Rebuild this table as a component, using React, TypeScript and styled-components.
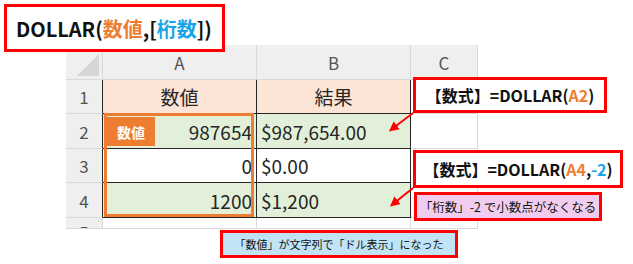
import * as React from 'react';
import styled, { createGlobalStyle } from 'styled-components';

const GlobalStyle = createGlobalStyle`
  body {
    margin: 0;
    background: #fff;
    font-family: "Noto Sans CJK JP", "Noto Sans", sans-serif;
  }
`;

const ORANGE = '#ED7D31';
const BLUE = '#16A6E8';
const RED = '#FF0000';
const GRID = '#d9d9d9';
const INK = '#262626';

const Page = styled.div`
  position: relative;
  width: 633px;
  height: 264px;
  overflow: hidden;
  box-sizing: border-box;
  padding: 45px 0 0 66px;
`;

const Sheet = styled.div`
  display: grid;
  grid-template-columns: 37px 154px 154px 67px;
  grid-template-rows: 35px 34px 35px 34px 35px 11px;
`;

const Corner = styled.div`
  position: relative;
  background: #efefef;
  border-right: 1px solid ${GRID};
  border-bottom: 1px solid ${GRID};

  &::after {
    content: '';
    position: absolute;
    right: 3px;
    bottom: 3px;
    border-left: 22px solid transparent;
    border-bottom: 22px solid #d6d6d6;
  }
`;

const ColHead = styled.div`
  display: flex;
  align-items: center;
  justify-content: center;
  background: #efefef;
  border-right: 1px solid ${GRID};
  border-bottom: 1px solid ${GRID};
  color: #555;
  font-size: 17px;
`;

const RowHead = styled.div<{ $dark?: boolean; $cut?: boolean }>`
  display: flex;
  align-items: ${(p) => (p.$cut ? 'flex-start' : 'center')};
  justify-content: center;
  overflow: hidden;
  background: #efefef;
  border-right: 1px solid ${(p) => (p.$dark ? INK : GRID)};
  border-bottom: 1px solid ${GRID};
  color: #555;
  font-size: 17px;
  line-height: ${(p) => (p.$cut ? '28px' : 'normal')};
`;

const Cell = styled.div<{ $bg?: string; $align?: string; $table?: boolean }>`
  display: flex;
  align-items: center;
  justify-content: ${(p) => p.$align || 'flex-start'};
  padding: 0 4px;
  box-sizing: border-box;
  background: ${(p) => p.$bg || '#fff'};
  border-right: 1px solid ${(p) => (p.$table ? INK : GRID)};
  border-bottom: 1px solid ${(p) => (p.$table ? INK : GRID)};
  color: ${INK};
  font-size: 19px;
  white-space: nowrap;
`;

const TitleBox = styled.div`
  position: absolute;
  left: 4px;
  top: 4px;
  width: 221px;
  height: 48px;
  box-sizing: border-box;
  border: 3px solid ${RED};
  background: #fff;
  display: flex;
  align-items: center;
  padding-left: 9px;
  font-size: 20px;
  font-weight: 700;
  color: #111;
  white-space: nowrap;
`;

const Tint = styled.span<{ $c: string }>`
  color: ${(p) => p.$c};
`;

const ValueFrame = styled.div`
  position: absolute;
  left: 104px;
  top: 113px;
  width: 150px;
  height: 104px;
  box-sizing: border-box;
  border: 3px solid ${ORANGE};
`;

const ValueTag = styled.div`
  position: absolute;
  left: 0;
  top: 1px;
  width: 48px;
  height: 29px;
  background: ${ORANGE};
  color: #fff;
  font-size: 14px;
  font-weight: 700;
  display: flex;
  align-items: center;
  justify-content: center;
`;

const Callout = styled.div<{ $x: number; $y: number; $w: number; $h: number; $bg?: string; $size: number; $bold?: boolean }>`
  position: absolute;
  left: ${(p) => p.$x}px;
  top: ${(p) => p.$y}px;
  width: ${(p) => p.$w}px;
  height: ${(p) => p.$h}px;
  box-sizing: border-box;
  border: 3px solid ${RED};
  background: ${(p) => p.$bg || '#fff'};
  display: flex;
  align-items: center;
  justify-content: center;
  font-size: ${(p) => p.$size}px;
  font-weight: ${(p) => (p.$bold ? 700 : 400)};
  color: #111;
  white-space: nowrap;
`;

const Arrows = styled.svg`
  position: absolute;
  left: 0;
  top: 0;
  pointer-events: none;
`;

type Row = { n: number; a: string; b: string; bg: string; head?: boolean };

const rows: Row[] = [
  { n: 1, a: '数値', b: '結果', bg: '#FCE4D6', head: true },
  { n: 2, a: '987654', b: '$987,654.00', bg: '#E2F0D9' },
  { n: 3, a: '0', b: '$0.00', bg: '#fff' },
  { n: 4, a: '1200', b: '$1,200', bg: '#E2F0D9' },
];

const Arrow: React.FC<{ x1: number; y1: number; x2: number; y2: number }> = ({ x1, y1, x2, y2 }) => (
  <line x1={x1} y1={y1} x2={x2} y2={y2} stroke={RED} strokeWidth={2} markerEnd="url(#head)" />
);

const App: React.FC = () => {
  return (
    <Page>
      <GlobalStyle />
      <Sheet>
        <Corner />
        <ColHead>A</ColHead>
        <ColHead>B</ColHead>
        <ColHead>C</ColHead>
        {rows.map((r) => (
          <React.Fragment key={r.n}>
            <RowHead $dark>{r.n}</RowHead>
            <Cell $table $bg={r.bg} $align={r.head ? 'center' : 'flex-end'}>{r.a}</Cell>
            <Cell $table $bg={r.bg} $align={r.head ? 'center' : 'flex-start'}>{r.b}</Cell>
            <Cell />
          </React.Fragment>
        ))}
        <RowHead $cut>5</RowHead>
        <Cell />
        <Cell />
        <Cell />
      </Sheet>

      <TitleBox>
        DOLLAR(<Tint $c={ORANGE}>数値</Tint>,[<Tint $c={BLUE}>桁数</Tint>])
      </TitleBox>

      <ValueFrame>
        <ValueTag>数値</ValueTag>
      </ValueFrame>

      <Callout $x={413} $y={77} $w={194} $h={36} $size={16} $bold>
        【数式】=DOLLAR(<Tint $c={ORANGE}>A2</Tint>)
      </Callout>
      <Callout $x={413} $y={150} $w={210} $h={38} $size={16} $bold>
        【数式】=DOLLAR(<Tint $c={ORANGE}>A4</Tint>,<Tint $c={BLUE}>-2</Tint>)
      </Callout>
      <Callout $x={414} $y={192} $w={188} $h={29} $bg="#F0CDEE" $size={12.5}>
        「桁数」-2 で小数点がなくなる
      </Callout>
      <Callout $x={220} $y={230} $w={238} $h={28} $bg="#C0E4F6" $size={11}>
        「数値」が文字列で「ドル表示」になった
      </Callout>

      <Arrows width={633} height={264}>
        <defs>
          <marker id="head" markerWidth="5" markerHeight="5" refX="3" refY="2.5" orient="auto">
            <path d="M0,0 L5,2.5 L0,5 Z" fill={RED} />
          </marker>
        </defs>
        <Arrow x1={413} y1={113} x2={392} y2={129} />
        <Arrow x1={413} y1={188} x2={393} y2={204} />
      </Arrows>
    </Page>
  );
};

export default App;
